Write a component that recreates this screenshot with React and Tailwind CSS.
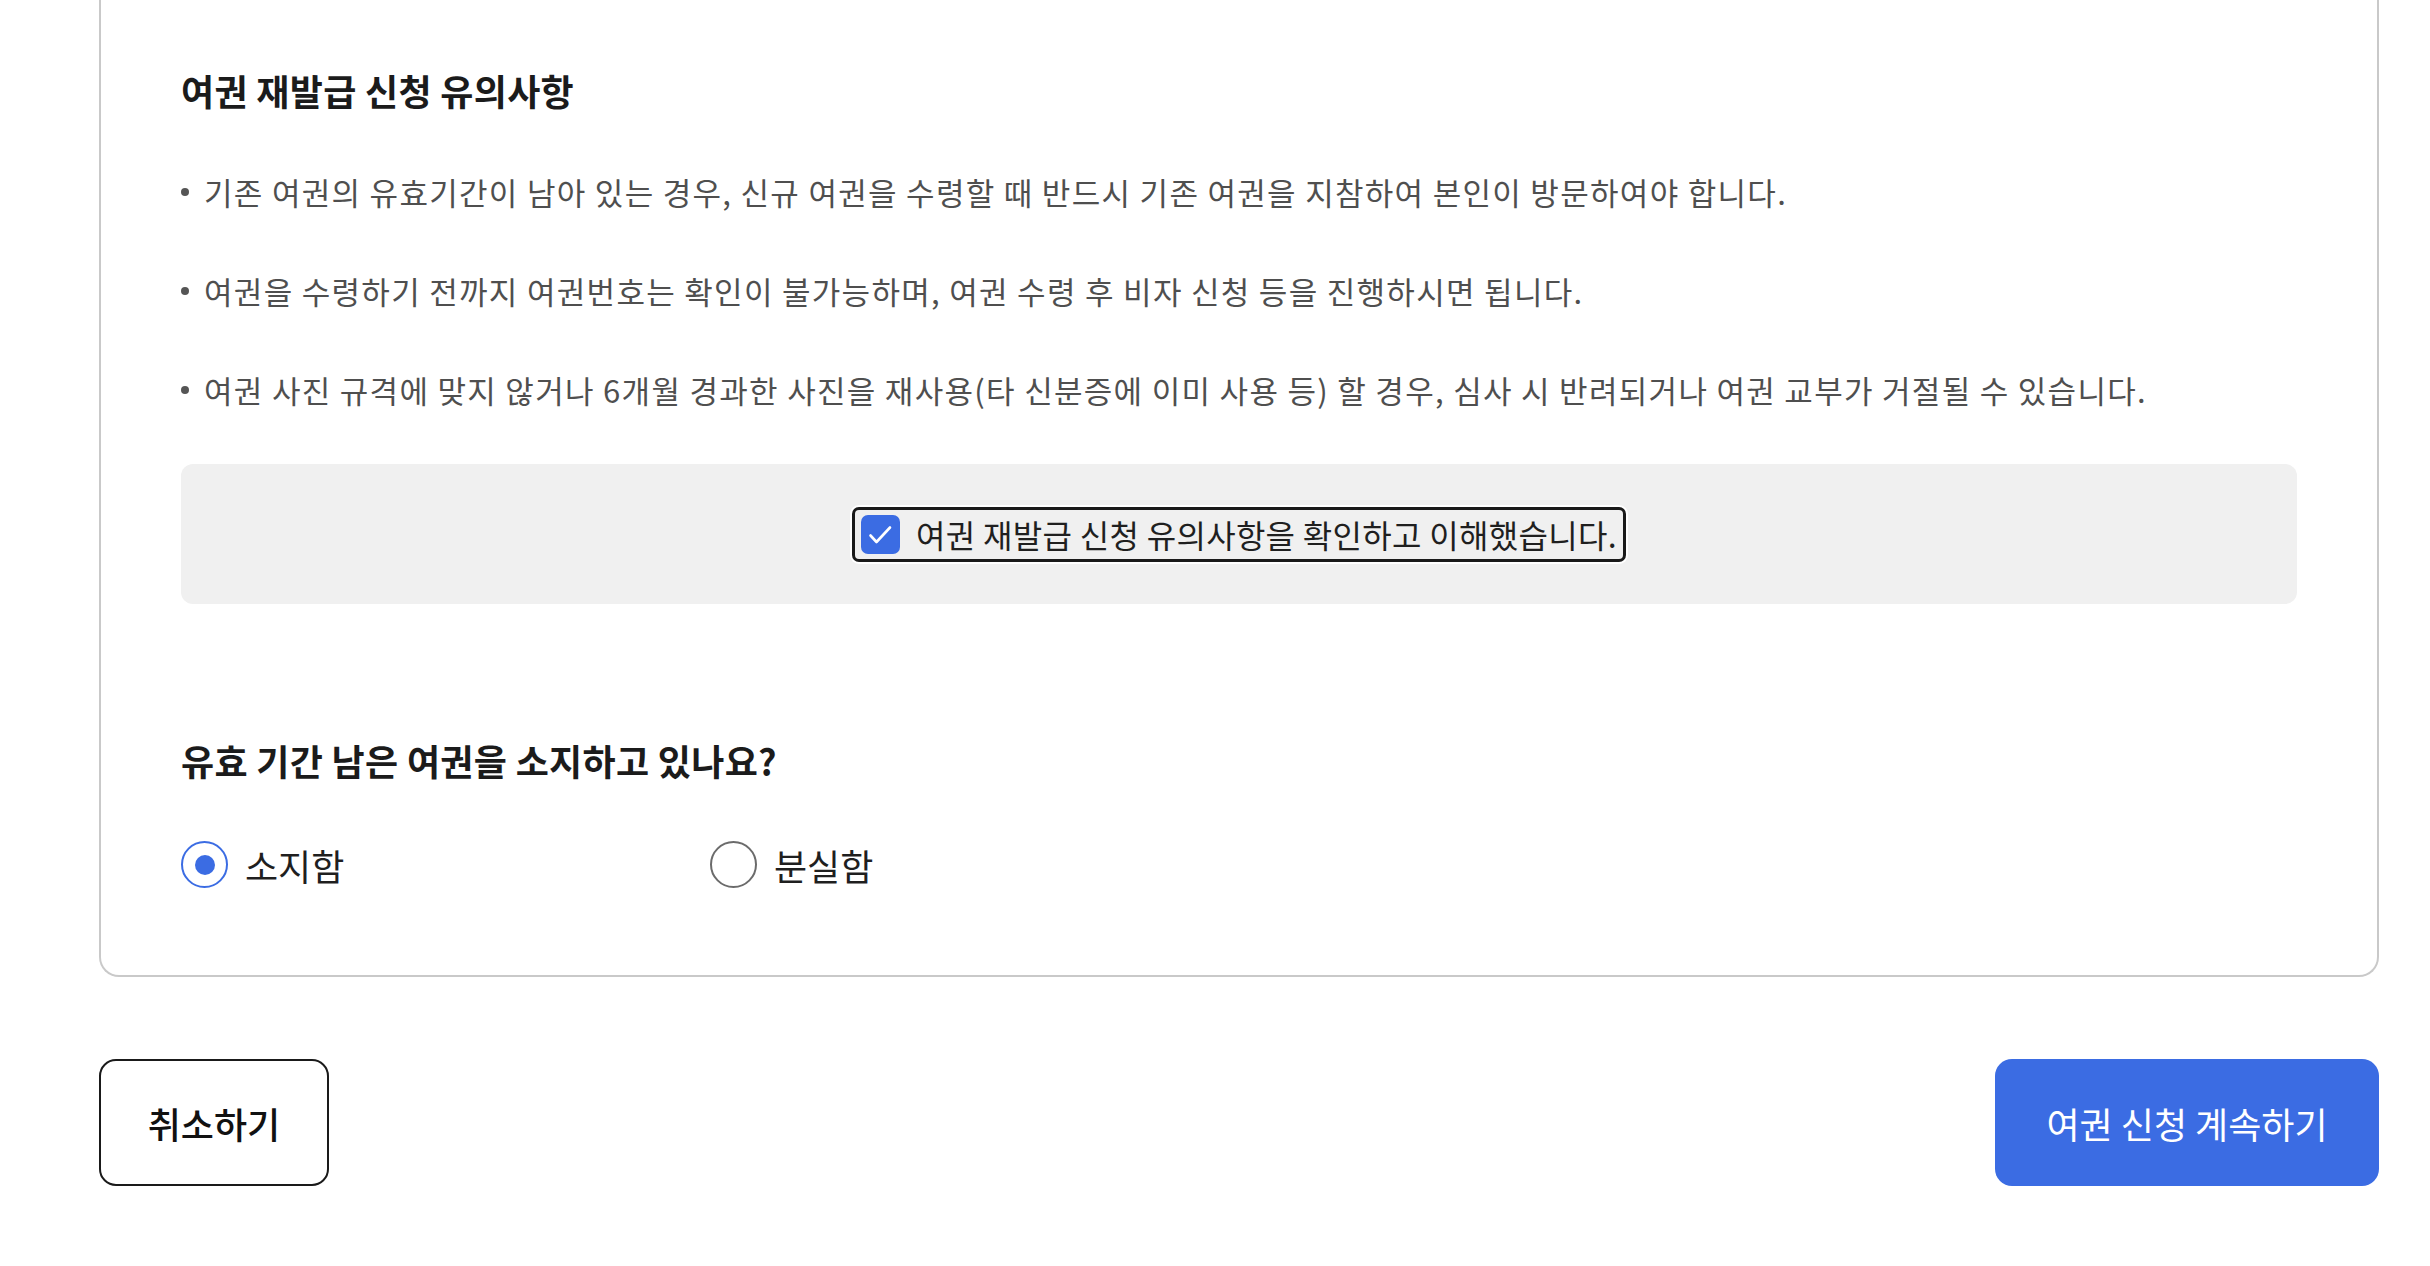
import { useState } from 'react';

// Notes shown before a passport reissue can continue.
const NOTICES = [
  '기존 여권의 유효기간이 남아 있는 경우, 신규 여권을 수령할 때 반드시 기존 여권을 지참하여 본인이 방문하여야 합니다.',
  '여권을 수령하기 전까지 여권번호는 확인이 불가능하며, 여권 수령 후 비자 신청 등을 진행하시면 됩니다.',
  '여권 사진 규격에 맞지 않거나 6개월 경과한 사진을 재사용(타 신분증에 이미 사용 등) 할 경우, 심사 시 반려되거나 여권 교부가 거절될 수 있습니다.',
];

const OPTIONS = [
  { value: 'keep', label: '소지함' },
  { value: 'lost', label: '분실함' },
];

function CheckIcon() {
  return (
    <svg width="39" height="39" viewBox="0 0 39 39" fill="none">
      <path d="M9.5 20.5 L15.5 27 L29 12.5" stroke="#fff" strokeWidth="2.6" strokeLinecap="round" strokeLinejoin="round" />
    </svg>
  );
}

function Radio({ checked, label, onSelect, className = '' }) {
  return (
    <button type="button" onClick={onSelect} className={`flex items-center gap-[17px] ${className}`}>
      <span
        className={`flex h-[47px] w-[47px] items-center justify-center rounded-full border-2 ${
          checked ? 'border-[#3b6ce3]' : 'border-[#6b6b6b]'
        }`}
      >
        {checked && <span className="h-[20px] w-[20px] rounded-full bg-[#3b6ce3]" />}
      </span>
      <span className="text-[36px] leading-[44px] text-[#1f1f1f]">{label}</span>
    </button>
  );
}

export default function App() {
  const [agreed, setAgreed] = useState(true);
  const [hasPassport, setHasPassport] = useState('keep');

  return (
    <div className="min-h-screen bg-white font-['Noto_Sans_CJK_KR','Noto_Sans',sans-serif]">
      <div className="ml-[99px] w-[2280px]">
        <section className="rounded-b-[20px] border-2 border-t-0 border-[#c9c9c9] px-[80px] pt-[68px] pb-[87px]">
          <h2 className="text-[36px] font-bold leading-[44px] tracking-[0.3px] text-[#1b1b1b]">여권 재발급 신청 유의사항</h2>

          <ul className="mt-[58px] flex flex-col gap-[55px]">
            {NOTICES.map((n) => (
              <li key={n} className="flex items-center text-[31px] leading-[44px] tracking-[1.3px] text-[#4f4f4f]">
                <span className="mr-[15px] h-[8px] w-[8px] shrink-0 rounded-full bg-[#555]" />
                <span>{n}</span>
              </li>
            ))}
          </ul>

          <div className="mt-[52px] flex h-[140px] items-center justify-center rounded-[12px] bg-[#f0f0f0]">
            <label className="flex h-[55px] cursor-pointer items-center gap-[16px] rounded-[7px] border-[3px] border-[#1a1a1a] pr-[6px] pl-[6px] shadow-[0_0_0_2px_#ffffff]">
              <input
                type="checkbox"
                className="sr-only"
                checked={agreed}
                onChange={(e) => setAgreed(e.target.checked)}
              />
              <span
                className={`flex h-[39px] w-[39px] items-center justify-center rounded-[7px] ${
                  agreed ? 'bg-[#3b6ce3]' : 'border-2 border-[#6b6b6b] bg-white'
                }`}
              >
                {agreed && <CheckIcon />}
              </span>
              <span className="text-[32px] leading-[40px] tracking-[0.3px] text-[#1f1f1f]">
                여권 재발급 신청 유의사항을 확인하고 이해했습니다.
              </span>
            </label>
          </div>

          <h2 className="mt-[134px] text-[36px] font-bold leading-[44px] tracking-[0.3px] text-[#1b1b1b]">
            유효 기간 남은 여권을 소지하고 있나요?
          </h2>

          <div className="mt-[59px] flex items-center">
            {OPTIONS.map((o, i) => (
              <Radio
                key={o.value}
                label={o.label}
                checked={hasPassport === o.value}
                onSelect={() => setHasPassport(o.value)}
                className={i === 0 ? 'w-[529px]' : ''}
              />
            ))}
          </div>
        </section>

        <div className="mt-[82px] flex items-center justify-between">
          <button
            type="button"
            className="h-[127px] w-[230px] rounded-[17px] border-2 border-[#1a1a1a] bg-white text-[36px] font-medium text-[#111]"
          >
            취소하기
          </button>
          <button
            type="button"
            className="h-[127px] w-[384px] rounded-[17px] bg-[#3b6ce3] text-[36px] text-white"
          >
            여권 신청 계속하기
          </button>
        </div>
      </div>
    </div>
  );
}
